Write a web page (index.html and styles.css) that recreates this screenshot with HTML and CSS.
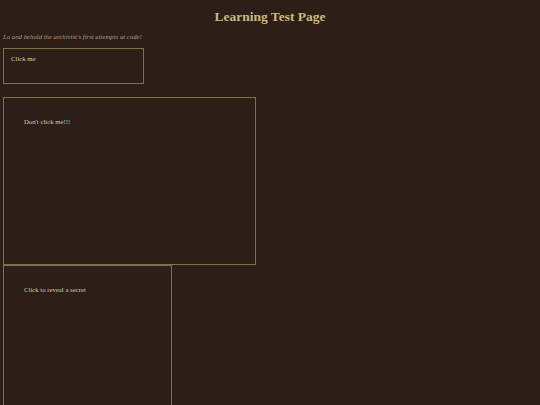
FILE: index.html
```html
<!DOCTYPE html>
<html lang="en">
<head>
<meta charset="utf-8">
<title>Learning Test Page</title>
<link rel="stylesheet" href="styles.css">
</head>
<body>
<h1 class="title">Learning Test Page</h1>
<p class="subtitle">Lo and behold the archivist's first attempts at code!</p>
<div class="box box-small"><span class="label">Click me</span></div>
<div class="box box-wide"><span class="label">Don't click me!!!</span></div>
<div class="box box-tall"><span class="label">Click to reveal a secret</span></div>
</body>
</html>
```

FILE: styles.css
```css
html, body {
  margin: 0;
  padding: 0;
  background: #2c1f17;
}
body {
  padding: 0 3px;
  font-family: "Liberation Serif", "Times New Roman", serif;
  font-size: 6.75px;
  color: #d8c8b2;
}
.title {
  margin: 9px 0 0;
  font-size: 13.5px;
  line-height: 16px;
  font-weight: bold;
  text-align: center;
  color: #c9ba7c;
}
.subtitle {
  margin: 8px 0 0;
  font-style: italic;
  line-height: 8px;
  color: #a99b87;
}
.box {
  box-sizing: border-box;
  border: 1px solid #807050;
}
.box-small {
  margin-top: 7px;
  width: 141px;
  height: 36px;
  padding: 6px 7px;
}
.box-wide {
  margin-top: 13px;
  width: 253px;
  height: 168px;
  padding: 20px 20px;
}
.box-tall {
  margin-top: 0;
  width: 169px;
  height: 168px;
  padding: 20px 20px;
}
.label {
  display: block;
  line-height: 8px;
}
```
